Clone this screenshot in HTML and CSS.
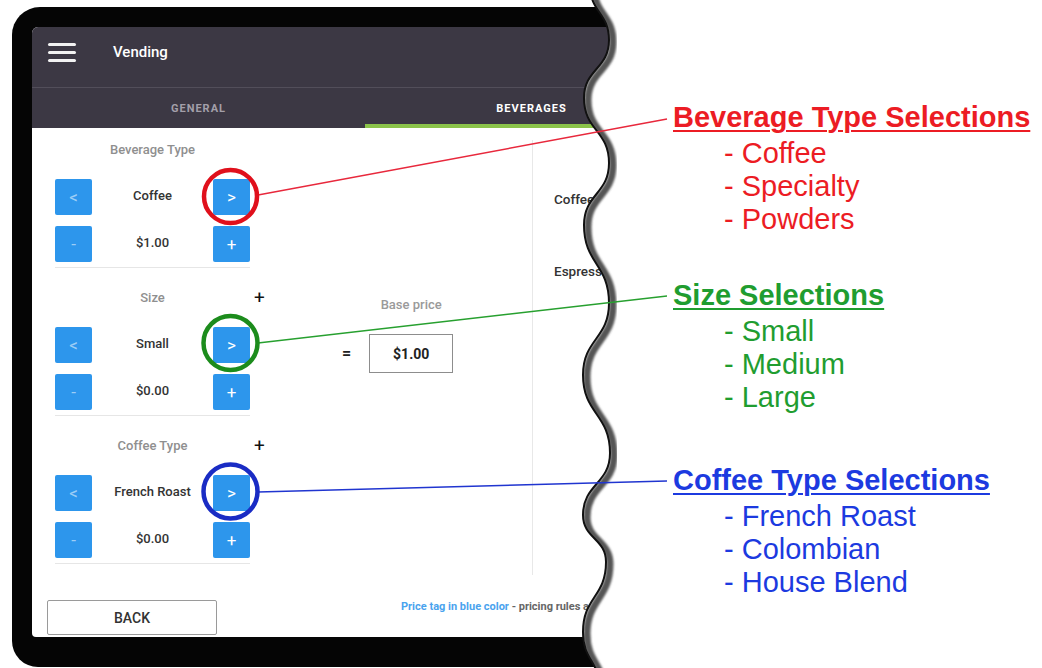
FILE: index.html
```html
<!DOCTYPE html>
<html lang="en">
<head>
  <meta charset="UTF-8">
  <title>Vending — Beverages</title>
  <link rel="stylesheet" href="styles.css">
</head>
<body>

<div class="stage">

  <!-- TABLET -->
  <div class="tablet">
    <div class="screen">
      <header class="appbar">
        <span class="menu"><i></i><i></i><i></i></span>
        <span class="title">Vending</span>
      </header>

      <nav class="tabs">
        <div class="tab">GENERAL</div>
        <div class="tab active">BEVERAGES</div>
      </nav>

      <main class="content">
        <div class="columns">

          <section class="selectors">
            <div class="group">
              <div class="group-head"><span class="group-label">Beverage Type</span></div>
              <div class="row"><button class="btn dim">&lt;</button><span class="value">Coffee</span><button class="btn">&gt;</button></div>
              <div class="row"><button class="btn dim">-</button><span class="value">$1.00</span><button class="btn">+</button></div>
            </div>
            <div class="group">
              <div class="group-head"><span class="group-label">Size</span><span class="plus">+</span></div>
              <div class="row"><button class="btn dim">&lt;</button><span class="value">Small</span><button class="btn">&gt;</button></div>
              <div class="row"><button class="btn dim">-</button><span class="value">$0.00</span><button class="btn">+</button></div>
            </div>
            <div class="group">
              <div class="group-head"><span class="group-label">Coffee Type</span><span class="plus">+</span></div>
              <div class="row"><button class="btn dim">&lt;</button><span class="value">French Roast</span><button class="btn">&gt;</button></div>
              <div class="row"><button class="btn dim">-</button><span class="value">$0.00</span><button class="btn">+</button></div>
            </div>
          </section>

          <section class="base">
            <div class="base-row">
              <span class="eq">=</span>
              <div class="base-price">
                <div class="base-label">Base price</div>
                <div class="base-box">$1.00</div>
              </div>
            </div>
          </section>

          <section class="list">
            <div class="list-item">Coffee</div>
            <div class="list-item">Espresso</div>
          </section>

        </div>

        <footer class="footer">
          <button class="back">BACK</button>
          <p class="legend"><span class="blue">Price tag in blue color</span> - pricing rules apply</p>
        </footer>
      </main>
    </div>
  </div>

  <!-- CALLOUTS -->
  <div class="notes">
    <div class="note note-red">
      <h2>Beverage Type Selections</h2>
      <ul>
        <li>- Coffee</li>
        <li>- Specialty</li>
        <li>- Powders</li>
      </ul>
    </div>
    <div class="note note-green">
      <h2>Size Selections</h2>
      <ul>
        <li>- Small</li>
        <li>- Medium</li>
        <li>- Large</li>
      </ul>
    </div>
    <div class="note note-blue">
      <h2>Coffee Type Selections</h2>
      <ul>
        <li>- French Roast</li>
        <li>- Colombian</li>
        <li>- House Blend</li>
      </ul>
    </div>
  </div>

  <!-- torn edge + pointer lines -->
  <svg class="overlay" width="1042" height="668" viewBox="0 0 1042 668">
    <defs>
      <clipPath id="paper">
        <path d="M590,-15 C590,12.5 609,12.5 609,40 C609,69 584,69 584,98 C584,130.5 609,130.5 609,163 C609,194 584,194 584,225 C584,264 609,264 609,303 C609,339 583,339 583,375 C583,414 610,414 610,453 C610,484 583,484 583,515 C583,538.5 606,538.5 606,562 C606,597 583,597 583,632 C583,661 600,661 600,690 L640,690 L640,-15 Z"/>
      </clipPath>
      <filter id="soft"><feGaussianBlur stdDeviation="1.3"/></filter>
    </defs>
    <path fill="#fff" d="M590,-15 C590,12.5 609,12.5 609,40 C609,69 584,69 584,98 C584,130.5 609,130.5 609,163 C609,194 584,194 584,225 C584,264 609,264 609,303 C609,339 583,339 583,375 C583,414 610,414 610,453 C610,484 583,484 583,515 C583,538.5 606,538.5 606,562 C606,597 583,597 583,632 C583,661 600,661 600,690 L640,690 L640,-15 Z"/>
    <g clip-path="url(#paper)">
      <path fill="none" stroke="#555" stroke-width="7" filter="url(#soft)" transform="translate(4,2)" d="M590,-15 C590,12.5 609,12.5 609,40 C609,69 584,69 584,98 C584,130.5 609,130.5 609,163 C609,194 584,194 584,225 C584,264 609,264 609,303 C609,339 583,339 583,375 C583,414 610,414 610,453 C610,484 583,484 583,515 C583,538.5 606,538.5 606,562 C606,597 583,597 583,632 C583,661 600,661 600,690"/>
    </g>
    <path fill="none" stroke="#111" stroke-width="2" d="M590,-15 C590,12.5 609,12.5 609,40 C609,69 584,69 584,98 C584,130.5 609,130.5 609,163 C609,194 584,194 584,225 C584,264 609,264 609,303 C609,339 583,339 583,375 C583,414 610,414 610,453 C610,484 583,484 583,515 C583,538.5 606,538.5 606,562 C606,597 583,597 583,632 C583,661 600,661 600,690"/>

    <line x1="258" y1="195" x2="667" y2="119" stroke="#e8283c" stroke-width="1.5"/>
    <line x1="258" y1="343" x2="667" y2="296" stroke="#27a02f" stroke-width="1.5"/>
    <line x1="258" y1="492" x2="667" y2="481" stroke="#2035d0" stroke-width="1.5"/>

    <circle cx="230.5" cy="196.5" r="26.5" fill="none" stroke="#e0101c" stroke-width="4.5"/>
    <circle cx="230.5" cy="343" r="27" fill="none" stroke="#1c8c1c" stroke-width="4.5"/>
    <circle cx="230.5" cy="491.5" r="27" fill="none" stroke="#1a2cc4" stroke-width="4.5"/>
  </svg>

</div>

</body>
</html>
```

FILE: styles.css
```css
body { margin:0; background:#fff; overflow:hidden; font-family:Roboto,'Noto Sans',sans-serif; }

.stage { position:relative; width:1042px; height:668px; display:flex; }

/* Tablet shell */
.tablet {
  display:flex; flex-shrink:0; width:598px; margin:7px 0 1px 12px;
  padding:20px 0 30px 20px; background:#050505;
  border-radius:28px 0 0 26px; overflow:hidden;
}
.screen {
  width:666px; flex-shrink:0; display:flex; flex-direction:column;
  background:#fff; border-radius:6px 0 0 4px; overflow:hidden;
}

/* App bar */
.appbar {
  height:60px; box-sizing:border-box; display:flex; align-items:center;
  padding:0 0 10px 16px; background:#3c3844; color:#fff;
}
.menu { display:flex; flex-direction:column; gap:5px; width:28px; }
.menu i { display:block; height:3px; background:#f2f2f2; border-radius:2px; }
.title { margin-left:37px; font-size:15px; font-weight:500; }

/* Tabs */
.tabs { display:flex; height:40px; background:#3c3844; border-top:1px solid #524e5a; }
.tab {
  flex:1; display:flex; align-items:center; justify-content:center;
  font-size:11px; font-weight:700; letter-spacing:1px; color:#a39fa9;
}
.tab.active { color:#fff; box-shadow:inset 0 -4px #8bc34a; }

/* Content */
.content { flex:1; display:flex; flex-direction:column; }
.columns { flex:1; display:flex; }

.selectors { width:235px; padding:11px 0 0 23px; }
.group { width:195px; padding-bottom:5px; margin-bottom:19px; border-bottom:1px solid #e6e6e6; }
.group-head { display:flex; align-items:center; height:20px; width:215px; }
.group-label { width:195px; text-align:center; font-size:13px; font-weight:500; color:#8f8f8f; }
.plus { margin-left:4px; font-size:19px; color:#111; }
.row { display:flex; align-items:center; height:36px; margin-top:20px; }
.row + .row { margin-top:11px; }
.btn {
  width:37px; height:36px; padding:0; border:none; border-radius:2px;
  background:#2d96ec; color:#fff; font-family:Roboto,sans-serif; font-size:17px;
}
.btn.dim { color:rgba(255,255,255,0.55); }
.value { flex:1; text-align:center; font-size:13px; font-weight:500; color:#333; padding-bottom:4px; }

.base { width:242px; box-sizing:border-box; padding:168px 0 0 52px; }
.base-row { display:flex; align-items:flex-end; gap:18px; }
.eq { font-size:16px; font-weight:700; line-height:19px; margin-bottom:10px; color:#222; }
.base-price { display:flex; flex-direction:column; align-items:center; }
.base-label { font-size:13px; font-weight:500; line-height:18px; color:#9a9a9a; margin-bottom:20px; }
.base-box {
  width:84px; height:39px; box-sizing:border-box; border:1px solid #8d8d8d;
  display:flex; align-items:center; justify-content:center;
  font-size:14px; font-weight:700; color:#222;
}

.list { flex:1; margin:12px 0 25px; padding:50px 0 0 21px; border-left:1px solid #e8e8e8; }
.list-item { font-size:13.5px; font-weight:500; line-height:18px; color:#333; white-space:nowrap; }
.list-item + .list-item { margin-top:54px; }

.footer { display:flex; align-items:flex-start; padding:0 0 2px 15px; }
.back {
  width:170px; height:35px; background:#fff; border:1.5px solid #9a9a9a; border-radius:2px;
  font-family:Roboto,sans-serif; font-size:14px; font-weight:500; color:#333;
}
.legend { margin:0 0 0 184px; font-size:11px; font-weight:700; line-height:14px; color:#666; white-space:nowrap; }
.legend .blue { color:#4aa3ee; }

/* Callouts */
.notes { margin-left:43px; padding-top:101px; font-family:'Liberation Sans',Arial,sans-serif; white-space:nowrap; }
.note h2 {
  margin:0; font-size:29px; font-weight:700; line-height:33px;
  text-decoration:underline; text-decoration-thickness:2px; text-underline-offset:3px;
}
.note ul { list-style:none; margin:3px 0 0 51px; padding:0; font-size:29px; line-height:33px; }
.note-red { color:#ec1c24; }
.note-green { color:#1f9d30; margin-top:43px; }
.note-blue { color:#1c3ae0; margin-top:50px; }

.overlay { position:absolute; left:0; top:0; pointer-events:none; }
```
